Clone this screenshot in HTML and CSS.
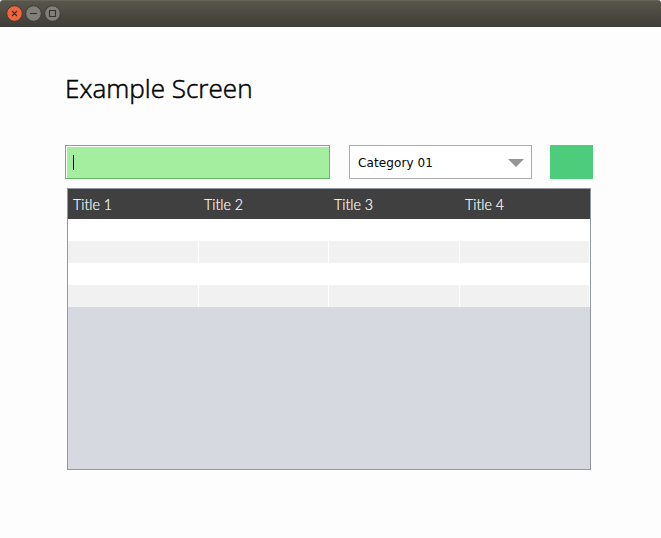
FILE: index.html
```html
<!DOCTYPE html>
<html lang="en">
<head>
<meta charset="utf-8">
<title>Example Screen</title>
<link rel="stylesheet" href="styles.css">
</head>
<body>
<header class="titlebar">
  <svg class="control" viewBox="0 0 17 17"><circle class="rim close" cx="8.5" cy="8.5" r="7.8"/><path class="glyph" d="M6 6l5 5M11 6l-5 5"/></svg>
  <svg class="control" viewBox="0 0 17 17"><circle class="rim" cx="8.5" cy="8.5" r="7.8"/><path class="glyph" d="M5 8.5h7"/></svg>
  <svg class="control" viewBox="0 0 17 17"><circle class="rim" cx="8.5" cy="8.5" r="7.8"/><path class="glyph" d="M5.5 5.5h6v6h-6z"/></svg>
</header>
<main class="screen">
  <h1 class="heading"><span>Example Screen</span></h1>
  <div class="toolbar">
    <div class="field"><span class="caret"></span></div>
    <div class="combo"><span>Category 01</span><svg class="arrow" viewBox="0 0 16 8"><path d="M0 0h16L8 8z"/></svg></div>
    <div class="action"></div>
  </div>
  <div class="table">
    <div class="row head"><div><span>Title 1</span></div><div><span>Title 2</span></div><div><span>Title 3</span></div><div><span>Title 4</span></div></div>
    <div class="row"><div></div><div></div><div></div><div></div></div>
    <div class="row alt"><div></div><div></div><div></div><div></div></div>
    <div class="row"><div></div><div></div><div></div><div></div></div>
    <div class="row alt"><div></div><div></div><div></div><div></div></div>
  </div>
</main>
</body>
</html>
```
FILE: styles.css
```css
* { box-sizing: border-box; }
body { margin: 0; height: 538px; overflow: hidden; background: #fdfdfd; }
.titlebar { height: 27px; padding: 4px 6px; display: flex; gap: 2px; background: linear-gradient(#59564c, #3d3c37); border-top: 1px solid #66635a; border-radius: 3px 3px 0 0; }
.control { width: 17px; height: 17px; display: block; }
.rim { fill: #817f77; stroke: #3b3a34; stroke-width: 1; }
.close { fill: #f0653a; }
.glyph { fill: none; stroke: #34322d; stroke-width: 1.1; }
.screen { padding: 42px 68px 0 65px; }
.heading { margin: 0; font: 300 26px/38px "Open Sans", "Noto Sans", sans-serif; color: #000; white-space: nowrap; }
.heading span { display: inline-block; -webkit-text-stroke: .5px #000; transform-origin: left; transform: scaleX(1.003); }
.toolbar { display: flex; height: 34px; margin-top: 38px; width: 528px; }
.field { width: 265px; background: #a3ee9f; border: 1px solid #6ab96a; box-shadow: inset 1px 1px #fff; padding: 9px 7px; }
.caret { display: block; width: 1px; height: 15px; background: #000; }
.combo { width: 183px; margin: 0 18px 0 19px; border: 1px solid #ababab; background: #fff; padding: 1px 7px 0 8px; display: flex; align-items: center; justify-content: space-between; font: 12px "DejaVu Sans", sans-serif; letter-spacing: .1px; color: #000; }
.arrow { width: 16px; height: 8px; fill: #969696; }
.action { width: 43px; background: #4dcc7b; }
.table { width: 524px; height: 282px; margin: 9px 0 0 2px; border: 1px solid #9297a1; background: #d6d9e0; }
.row { display: grid; grid-template-columns: 131px 130px 131px 130px; height: 22px; background: #fff; }
.row div { border-right: 1px solid #fff; }
.alt { background: #f1f1f1; }
.head { height: 30px; background: #404040; color: #fff; font: 300 15px/31px Lato, sans-serif; }
.row.head div { border: 0; padding-left: 4.5px; white-space: nowrap; }
.head span { display: inline-block; transform-origin: left; transform: scaleX(.95); -webkit-text-stroke: .2px #fff; }
```
